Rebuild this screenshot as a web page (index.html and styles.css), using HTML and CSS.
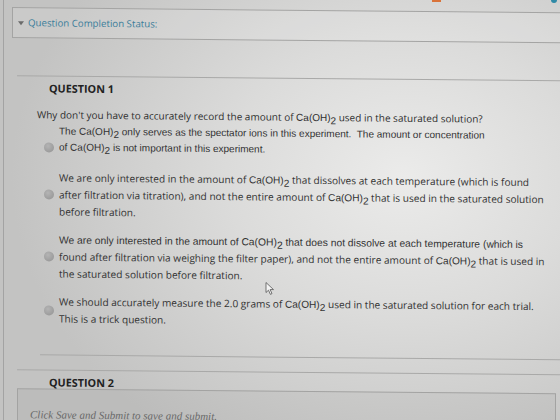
FILE: index.html
```html
<!DOCTYPE html>
<html lang="en">
<head>
  <meta charset="UTF-8">
  <meta name="viewport" content="width=device-width, initial-scale=1.0">
  <title>Take Test</title>
  <link rel="stylesheet" href="styles.css">
</head>
<body>
  <div class="toolbar-bits">
    <span class="bit-orange"></span>
    <span class="bit-teal"></span>
  </div>

  <div class="frame">
    <div class="status">
      <span class="status-arrow"></span>
      <span class="status-text">Question Completion Status:</span>
    </div>

    <div class="question">
      <h3 class="q-title">QUESTION 1</h3>
      <p class="q-text">Why don't you have to accurately record the amount of <span class="chem">Ca(OH)<sub>2</sub></span> used in the saturated solution?</p>

      <div class="options">
        <div class="option option-low">
          <span class="radio"></span>
          <div class="opt-text arial">The Ca(OH)<sub>2</sub> only serves as the spectator ions in this experiment.&nbsp; The amount or concentration<br>of Ca(OH)<sub>2</sub> is not important in this experiment.</div>
        </div>
        <div class="option">
          <span class="radio"></span>
          <div class="opt-text">We are only interested in the amount of <span class="chem">Ca(OH)<sub>2</sub></span> that dissolves at each temperature (which is found<br>after filtration via titration), and not the entire amount of <span class="chem">Ca(OH)<sub>2</sub></span> that is used in the saturated solution<br>before filtration.</div>
        </div>
        <div class="option">
          <span class="radio"></span>
          <div class="opt-text"><span class="arial wide">We are only interested in the amount of Ca(OH)<sub>2</sub> that does not dissolve at each temperature (which is</span><br>found after filtration via weighing the filter paper), and not the entire amount of <span class="chem">Ca(OH)<sub>2</sub></span> that is used in<br>the saturated solution before filtration.</div>
        </div>
        <div class="option">
          <span class="radio"></span>
          <div class="opt-text">We should accurately measure the 2.0 grams of <span class="chem">Ca(OH)<sub>2</sub></span> used in the saturated solution for each trial.<br>This is a trick question.</div>
        </div>
      </div>

      <div class="q-divider"></div>
    </div>

    <h3 class="q-title q-next">QUESTION 2</h3>
    <div class="submit-box">
      <p class="submit-text">Click Save and Submit to save and submit.</p>
    </div>

    <svg class="cursor" width="10" height="14" viewBox="0 0 10 14">
      <path d="M1 1 L1 11 L3.5 8.6 L5.4 12.8 L7 12 L5.1 8 L8.5 8 Z" fill="#f4f4f4" stroke="#555" stroke-width="0.8" stroke-linejoin="round"/>
    </svg>
  </div>
</body>
</html>
```

FILE: styles.css
```css
body {
  margin: 0;
  height: 420px;
  overflow: hidden;
  font-family: "Open Sans", "Noto Sans", sans-serif;
  color: #333;
  background: radial-gradient(ellipse 70% 75% at 72% 42%, #ebebea 0%, #dbdbda 45%, #c3c3c2 100%);
}

.toolbar-bits {
  display: flex;
  height: 2px;
  padding-left: 432px;
}

.bit-orange {
  width: 9px;
  height: 2px;
  background: #d9733a;
}

.bit-teal {
  width: 6px;
  height: 3px;
  margin-left: 110px;
  border-radius: 0 0 3px 3px;
  background: #2f8aa6;
}

.frame {
  position: relative;
  margin: -2px 0 0 3px;
  height: 440px;
  border-left: 1px solid #a3a3a3;
  transform: skewY(0.55deg);
  transform-origin: 0 0;
}

.status {
  display: flex;
  align-items: center;
  gap: 4px;
  height: 29px;
  margin: 0 0 0 8px;
  padding-left: 5px;
  position: relative;
  top: 7px;
  border: 1px solid #a4a4a3;
  border-right: none;
  background: rgba(255, 255, 255, 0.12);
}

.status-arrow {
  width: 0;
  height: 0;
  border-left: 3px solid transparent;
  border-right: 3px solid transparent;
  border-top: 4px solid #6b6b6b;
}

.status-text {
  font-size: 9.7px;
  color: #3b7d9a;
}

.question {
  margin: 44px 0 0 13px;
  border-top: 1px solid #a9a9a8;
  border-bottom: 1px solid #a9a9a8;
  padding-bottom: 14px;
}

.q-title {
  margin: 0;
  padding: 5px 0 0 32px;
  font-size: 10.8px;
  line-height: 14px;
  font-weight: 700;
  color: #222;
}

.q-text {
  margin: 11px 0 0 20px;
  font-size: 10px;
  line-height: 16px;
  color: #2e2e2e;
}

sub {
  font-size: 1em;
  vertical-align: baseline;
  position: relative;
  top: 3px;
  line-height: 0;
}

.chem, .arial {
  font-family: "Liberation Sans", Arial, sans-serif;
}

.options {
  display: flex;
  flex-direction: column;
  gap: 12px;
  margin: 0 0 0 27px;
}

.option {
  display: flex;
  align-items: center;
  gap: 5px;
}

.option-low {
  margin-bottom: 2px;
}

.option-low .radio {
  align-self: flex-end;
  margin-bottom: 3px;
}

.radio {
  flex: none;
  width: 10px;
  height: 10px;
  border-radius: 50%;
  background: radial-gradient(circle at 40% 35%, #b4b4b4, #929292);
}

.opt-text {
  font-size: 10.1px;
  line-height: 16px;
  color: #333;
}

.opt-text.arial {
  font-size: 10px;
}

.arial.wide {
  font-size: 10.3px;
}

.q-divider {
  margin: 28px 0 0 23px;
  border-top: 1px solid #a9a9a8;
}

.q-next {
  padding: 6px 0 0 45px;
  line-height: 12px;
}

.submit-box {
  margin: 0 0 0 13px;
  width: 537px;
  height: 40px;
  border: 1px solid #a3a3a2;
  background: rgba(0, 0, 0, 0.03);
}

.submit-text {
  margin: 19px 0 0 12px;
  font-family: "Liberation Serif", serif;
  font-style: italic;
  font-size: 11px;
  line-height: 12px;
  color: #6a6a6a;
}

.cursor {
  position: absolute;
  left: 261px;
  top: 279px;
}
```
